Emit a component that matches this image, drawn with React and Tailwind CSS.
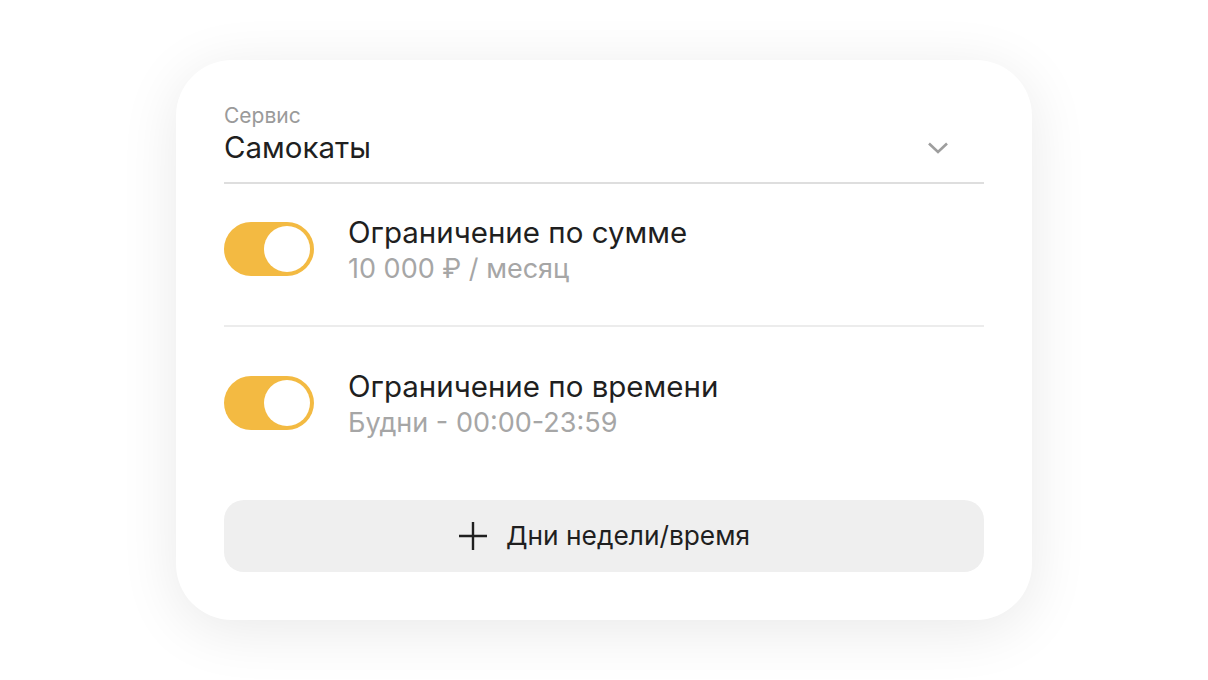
import React, { useState } from 'react';

const Toggle = ({ on, onChange }) => (
  <button
    onClick={onChange}
    className={`w-[90px] h-[54px] rounded-full p-[4px] flex shrink-0 transition-colors ${on ? 'bg-[#f3ba42] justify-end' : 'bg-[#e5e5e5] justify-start'}`}
  >
    <span className="block w-[46px] h-[46px] rounded-full bg-white" />
  </button>
);

const LimitRow = ({ title, subtitle, on, onToggle }) => (
  <div className="flex items-start gap-[34px]">
    <Toggle on={on} onChange={onToggle} />
    <div className="flex flex-col -mt-[7px]">
      <span className="text-[29.5px] leading-[34px] text-[#1f1f1f]">{title}</span>
      <span className="text-[27px] leading-[40px] text-[#a6a6a6]">{subtitle}</span>
    </div>
  </div>
);

const App = () => {
  const [sumOn, setSumOn] = useState(true);
  const [timeOn, setTimeOn] = useState(true);

  return (
    <div className="w-[1208px] h-[680px] bg-white flex justify-center pt-[60px]" style={{ fontFamily: 'Inter, "Noto Sans", sans-serif' }}>
      <div className="w-[856px] h-[560px] bg-white rounded-[56px] shadow-[0_10px_60px_rgba(0,0,0,0.09)] px-[48px] pt-[44px] pb-[48px] flex flex-col">
        <div className="flex items-center justify-between border-b-2 border-[#dedede] pb-[16px]">
          <div className="flex flex-col">
            <span className="text-[21px] leading-[24px] text-[#9a9a9a]">Сервис</span>
            <span className="text-[29.5px] leading-[38px] text-[#1f1f1f]">Самокаты</span>
          </div>
          <svg width="22" height="14" viewBox="0 0 22 14" className="mr-[35px] mt-[26px]" fill="none">
            <path d="M2 2.5l9 8.5 9-8.5" stroke="#9e9e9e" strokeWidth="2.6" />
          </svg>
        </div>

        <div className="pt-[38px] pb-[36px] border-b-2 border-[#ececec]">
          <LimitRow title="Ограничение по сумме" subtitle="10 000 ₽ / месяц" on={sumOn} onToggle={() => setSumOn(!sumOn)} />
        </div>

        <div className="pt-[49px]">
          <LimitRow title="Ограничение по времени" subtitle="Будни - 00:00-23:59" on={timeOn} onToggle={() => setTimeOn(!timeOn)} />
        </div>

        <button className="mt-auto h-[72px] w-full rounded-[20px] bg-[#efefef] flex items-center justify-center gap-[18px] text-[26.3px] text-[#1f1f1f]">
          <svg width="30" height="30" viewBox="0 0 30 30" fill="none">
            <path d="M15 1v28M1 15h28" stroke="#1f1f1f" strokeWidth="2.4" />
          </svg>
          <span>Дни недели/время</span>
        </button>
      </div>
    </div>
  );
};

export default App;
